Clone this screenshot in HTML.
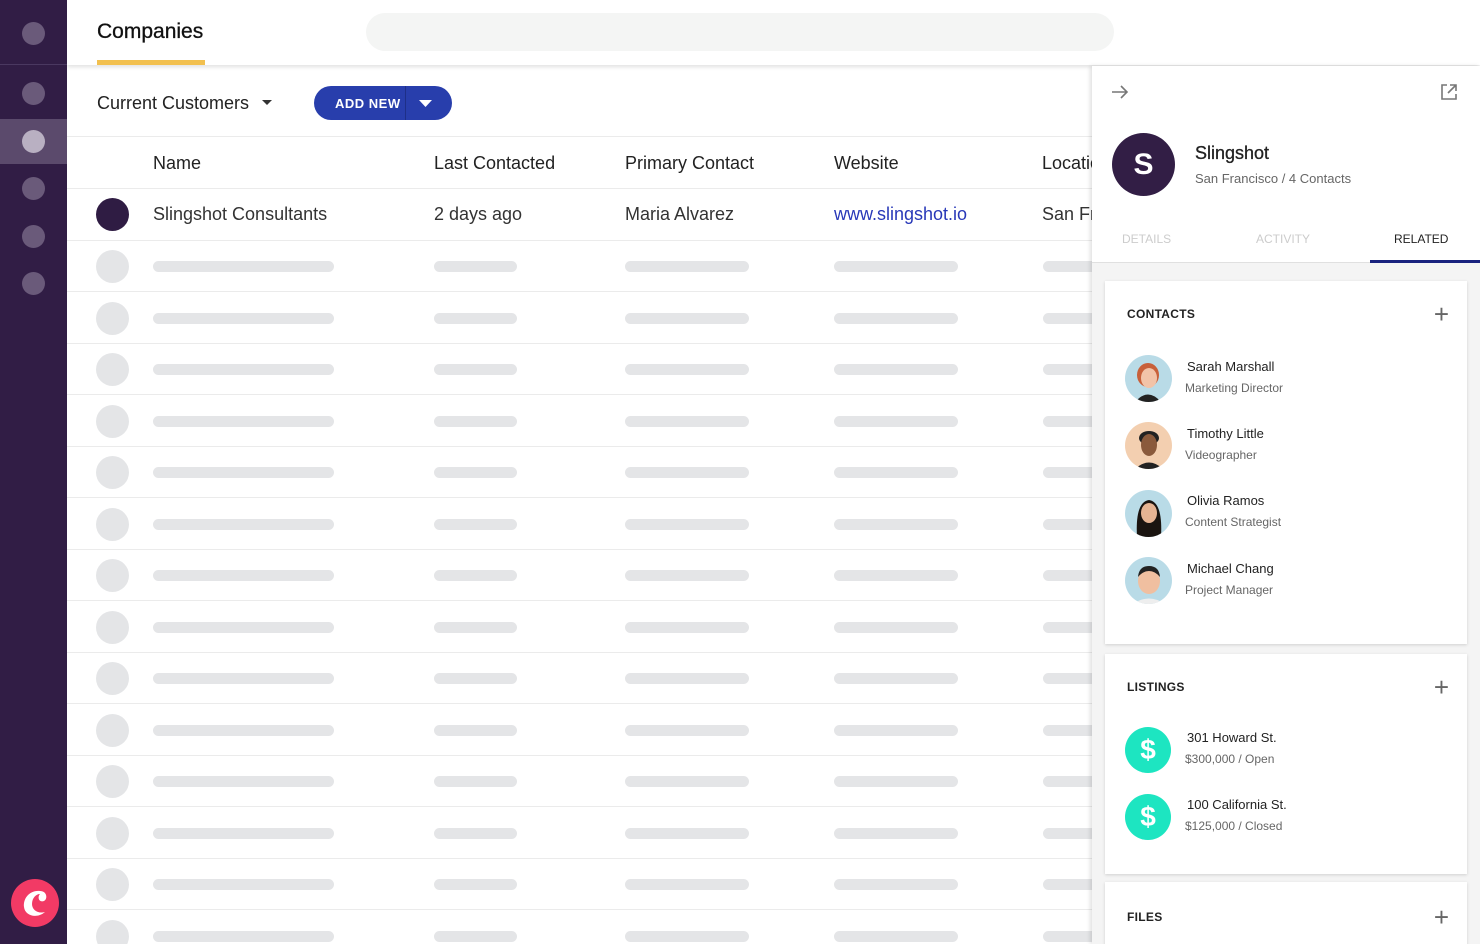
<!DOCTYPE html>
<html><head><meta charset="utf-8"><style>
*{box-sizing:border-box;margin:0;padding:0}
html,body{width:1480px;height:944px;overflow:hidden}
body{font-family:"Liberation Sans",sans-serif;background:#fff;position:relative;color:#222}
.wrap{position:absolute;left:0;top:0;width:1480px;height:944px;overflow:hidden}
.side{position:absolute;left:0;top:0;width:67px;height:944px;background:#311d45;z-index:4}
.dot{position:absolute;left:22px;width:23px;height:23px;border-radius:50%;background:#6a5a7a}
.abs{position:absolute}
.top{position:absolute;left:67px;top:0;width:1413px;height:65px;background:#fff;box-shadow:0 2px 4px rgba(0,0,0,.12);z-index:2}
.row{position:absolute;left:67px;width:1025px;border-bottom:1px solid #ebebeb}
.sk{position:absolute;height:11px;border-radius:6px;background:#e4e5e7}
.cir{position:absolute;left:96px;width:33px;height:33px;border-radius:50%;background:#e4e5e7}
.hd{position:absolute;font-size:18px;color:#222;top:153px}
.cell{position:absolute;font-size:18px;color:#333;top:204px}
.panel{position:absolute;left:1092px;top:66px;width:388px;height:878px;background:#f4f4f4;box-shadow:-2px 0 4px rgba(0,0,0,.12);z-index:3;overflow:hidden}
.card{position:absolute;left:13px;width:362px;background:#fff;box-shadow:0 1px 3px rgba(0,0,0,.15)}
.ct{position:absolute;left:22px;font-size:12px;font-weight:bold;color:#222;letter-spacing:.3px}
.plus{position:absolute;right:18px;font-size:26px;color:#666;font-weight:300;line-height:1}
.nm{position:absolute;left:82px;font-size:13px;color:#222}
.sb{position:absolute;left:80px;font-size:12px;color:#666}
.av{position:absolute;left:20px;width:47px;height:47px;border-radius:50%;overflow:hidden}
.money{position:absolute;left:20px;width:46px;height:46px;border-radius:50%;background:#1de5c1;color:#fff;font-size:28px;text-align:center;line-height:46px;font-weight:bold}
</style></head><body><div class="wrap">
<div class="side">
<div class="dot" style="top:22px"></div>
<div class="abs" style="left:0;top:64px;width:67px;height:1px;background:#4a3860"></div>
<div class="dot" style="top:82px"></div>
<div class="abs" style="left:0;top:119px;width:67px;height:45px;background:#5b4a6c"></div>
<div class="dot" style="top:130px;background:#b9b0c2"></div>
<div class="dot" style="top:177px"></div>
<div class="dot" style="top:225px"></div>
<div class="dot" style="top:272px"></div>
<div class="abs" style="left:11px;top:879px;width:48px;height:48px;border-radius:50%;background:#f23a65"></div>
<svg class="abs" style="left:11px;top:879px" width="48" height="48" viewBox="0 0 48 48"><path d="M29 12 C18 11 12 20 13 28 C14 37 26 40 34 33 C27 35 21 31 21 25 C21 19 25 15 29 15 C26 18 28 24 33 22 C37 20 36 12 29 12Z" fill="#fff"/></svg>
</div>
<div class="top">
<div class="abs" style="left:30px;top:20px;font-size:21px;color:#111;-webkit-text-stroke:0.3px #111">Companies</div>
<div class="abs" style="left:30px;top:60px;width:108px;height:5px;background:#f2c04f"></div>
<div class="abs" style="left:299px;top:13px;width:748px;height:38px;border-radius:19px;background:#f4f5f4"></div>
</div>
<div class="abs" style="left:97px;top:93px;font-size:18px;color:#222">Current Customers</div>
<svg class="abs" style="left:262px;top:100px" width="10" height="6"><path d="M0 0H10L5 5Z" fill="#333"/></svg>
<div class="abs" style="left:314px;top:86px;width:138px;height:34px;border-radius:17px;background:#283eac"></div>
<div class="abs" style="left:335px;top:96px;font-size:13px;font-weight:bold;color:#fff;letter-spacing:.5px">ADD NEW</div>
<div class="abs" style="left:405px;top:86px;width:1px;height:34px;background:#1e2f88"></div>
<svg class="abs" style="left:419px;top:100px" width="13" height="7"><path d="M0 0H13L6.5 7Z" fill="#fff"/></svg>
<div class="row" style="top:136px;height:1px"></div>
<div class="hd" style="left:153px">Name</div><div class="hd" style="left:434px">Last Contacted</div><div class="hd" style="left:625px">Primary Contact</div><div class="hd" style="left:834px">Website</div><div class="hd" style="left:1042px">Location</div>
<div class="row" style="top:137px;height:52px"></div>
<div class="row" style="top:189px;height:52px"></div>
<div class="cir" style="top:198px;background:#2f1c43"></div>
<div class="cell" style="left:153px">Slingshot Consultants</div><div class="cell" style="left:434px">2 days ago</div><div class="cell" style="left:625px">Maria Alvarez</div><div class="cell" style="left:834px;color:#2838b8">www.slingshot.io</div><div class="cell" style="left:1042px">San Francisco</div>
<div id="rows"></div>
<script>
var h='';for(var i=0;i<14;i++){var t=240+i*51.5;h+='<div class="row" style="top:'+t+'px;height:52px"></div><div class="cir" style="top:'+(t+10)+'px"></div>';var y=t+21;[[153,181],[434,83],[625,124],[834,124],[1043,60]].forEach(function(b){h+='<div class="sk" style="left:'+b[0]+'px;top:'+y+'px;width:'+b[1]+'px"></div>'});}
document.getElementById('rows').innerHTML=h;
</script>
<div class="panel">
<div class="abs" style="left:0;top:0;width:388px;height:197px;background:#fff;border-bottom:1px solid #e0e0e0"></div>
<svg class="abs" style="left:19px;top:18px" width="18" height="16"><path d="M1 8H16M10 2L16 8L10 14" stroke="#777" stroke-width="1.6" fill="none"/></svg>
<svg class="abs" style="left:348px;top:17px" width="18" height="18"><path d="M7 2H2V16H16V11M10 2H16V8M16 2L8 10" stroke="#777" stroke-width="1.6" fill="none"/></svg>
<div class="abs" style="left:20px;top:67px;width:63px;height:63px;border-radius:50%;background:#321e45;color:#fff;font-size:30px;font-weight:bold;text-align:center;line-height:63px">S</div>
<div class="abs" style="left:103px;top:77px;font-size:18px;color:#222;-webkit-text-stroke:0.3px #222">Slingshot</div>
<div class="abs" style="left:103px;top:105px;font-size:13px;color:#666">San Francisco / 4 Contacts</div>
<div class="abs" style="left:30px;top:166px;font-size:12px;color:#ccc">DETAILS</div>
<div class="abs" style="left:164px;top:166px;font-size:12px;color:#ccc">ACTIVITY</div>
<div class="abs" style="left:302px;top:166px;font-size:12px;color:#222">RELATED</div>
<div class="abs" style="left:278px;top:194px;width:110px;height:3px;background:#1a237e"></div>
<div class="card" style="top:215px;height:363px">
<div class="ct" style="top:26px">CONTACTS</div><div class="plus" style="top:20px">+</div>
<div class="av" style="top:74px;background:#b9dbe7"><svg width="47" height="47"><ellipse cx="23" cy="20" rx="11" ry="12" fill="#c8603a"/><ellipse cx="24" cy="23" rx="8" ry="10" fill="#f2c3a8"/><path d="M10 47Q23 32 36 47Z" fill="#222"/></svg></div>
<div class="nm" style="top:78px">Sarah Marshall</div><div class="sb" style="top:100px">Marketing Director</div>
<div class="av" style="top:141px;background:#f3cfb0"><svg width="47" height="47"><ellipse cx="24" cy="16" rx="10" ry="7" fill="#222"/><ellipse cx="24" cy="23" rx="8" ry="11" fill="#8a5a3c"/><path d="M10 47Q24 34 38 47Z" fill="#222"/></svg></div>
<div class="nm" style="top:145px">Timothy Little</div><div class="sb" style="top:167px">Videographer</div>
<div class="av" style="top:209px;background:#b9dbe7"><svg width="47" height="47"><path d="M12 47Q10 12 24 10Q38 12 36 47Z" fill="#1a1410"/><ellipse cx="24" cy="23" rx="8" ry="10" fill="#e6b493"/></svg></div>
<div class="nm" style="top:212px">Olivia Ramos</div><div class="sb" style="top:234px">Content Strategist</div>
<div class="av" style="top:276px;background:#b9dbe7"><svg width="47" height="47"><ellipse cx="24" cy="24" rx="11" ry="13" fill="#f0bfa0"/><path d="M13 20Q14 9 24 9Q34 9 35 20Q30 14 24 14Q18 14 13 20Z" fill="#222"/><path d="M8 47Q24 36 40 47Z" fill="#eee"/></svg></div>
<div class="nm" style="top:280px">Michael Chang</div><div class="sb" style="top:302px">Project Manager</div>
</div>
<div class="card" style="top:588px;height:220px">
<div class="ct" style="top:26px">LISTINGS</div><div class="plus" style="top:20px">+</div>
<div class="money" style="top:73px">$</div>
<div class="nm" style="top:76px">301 Howard St.</div><div class="sb" style="top:98px">$300,000 / Open</div>
<div class="money" style="top:140px">$</div>
<div class="nm" style="top:143px">100 California St.</div><div class="sb" style="top:165px">$125,000 / Closed</div>
</div>
<div class="card" style="top:816px;height:80px">
<div class="ct" style="top:28px">FILES</div><div class="plus" style="top:22px">+</div>
</div>
</div>
</div></body></html>
